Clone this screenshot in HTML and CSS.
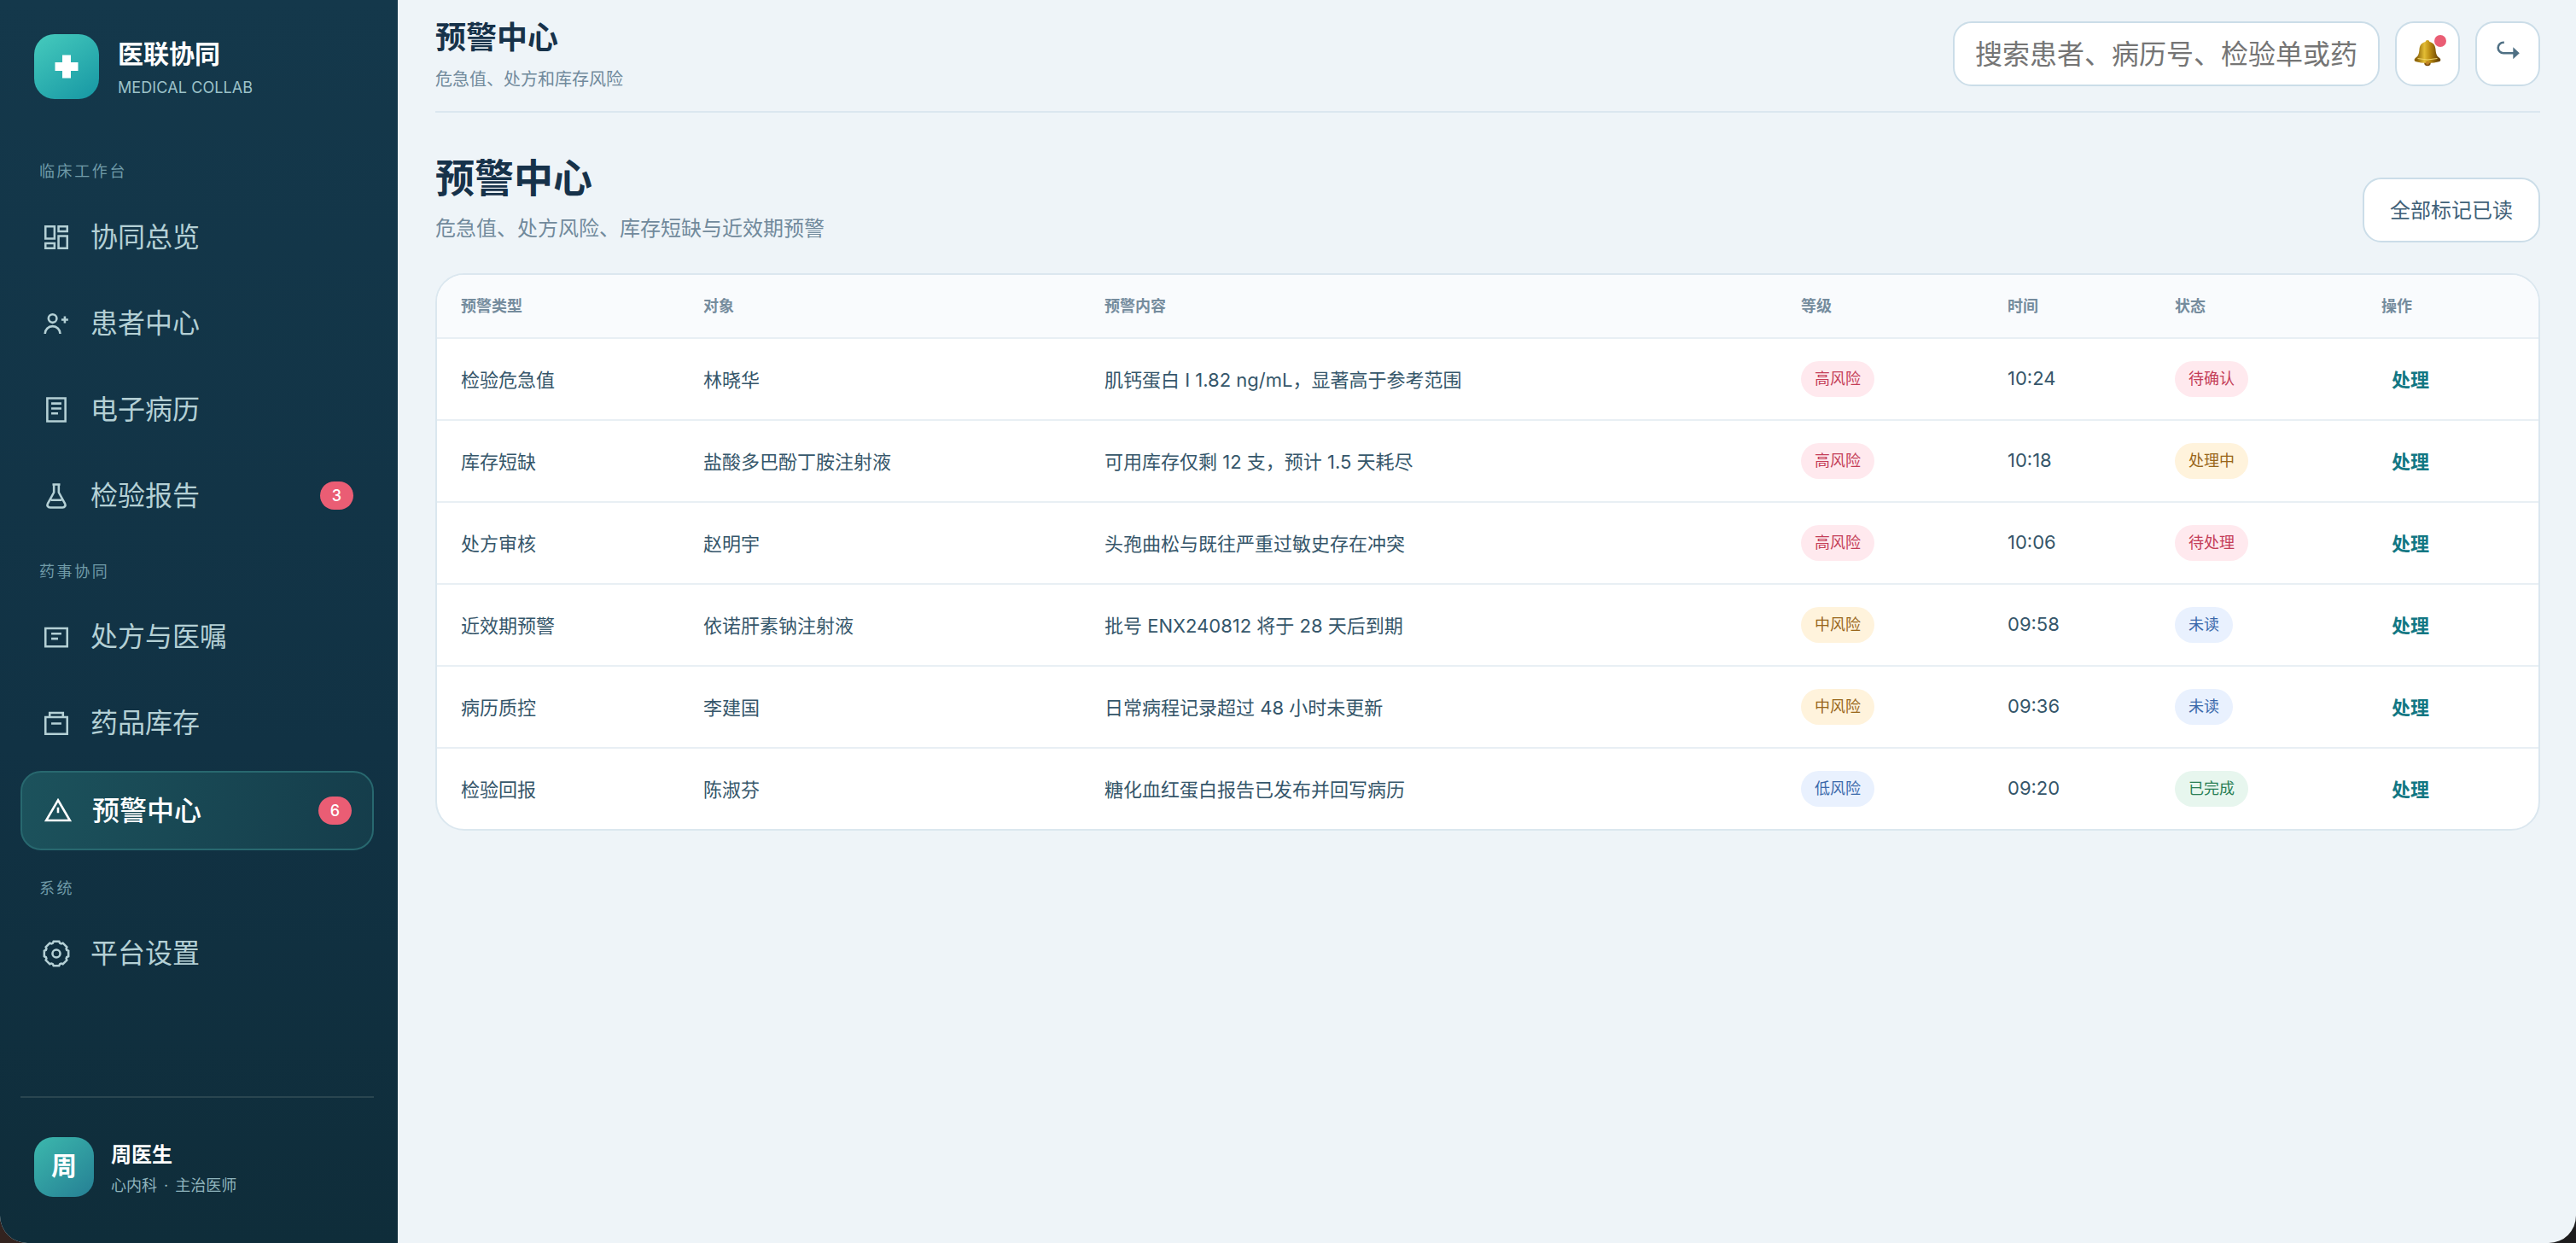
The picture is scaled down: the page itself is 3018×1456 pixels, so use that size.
FILE: index.html
```
<!DOCTYPE html>
<html lang="zh-CN">
<head>
    <meta charset="UTF-8">
    <meta name="viewport" content="width=device-width, initial-scale=1.0">
    <title>医联协同 - 预警中心</title>
    <link rel="stylesheet" href="styles.css">
</head>
<body>
    <div class="app">
        <aside class="sidebar">
            <div class="brand">
                <div class="brand-mark">
                    <svg width="28" height="28" viewBox="0 0 28 28"><path d="M9 0.5h10v8.5h8.5v10H19v8.5H9V19H0.5V9H9z" fill="#fff"/></svg>
                </div>
                <div class="brand-text">
                    <strong>医联协同</strong>
                    <span>MEDICAL COLLAB</span>
                </div>
            </div>

            <nav class="nav">
                <div class="nav-label">临床工作台</div>
                <a class="nav-item" href="#">
                    <svg class="icon" viewBox="0 0 24 24"><path d="M3 3h7.500v10H3zM13.800 3H21v4h-7.200zM13.800 11H21v10h-7.200zM3 17h7.500v4H3z"/></svg>
                    <span>协同总览</span>
                </a>
                <a class="nav-item" href="#">
                    <svg class="icon" viewBox="0 0 24 24"><circle cx="8.900" cy="7.800" r="3.400"/><path d="M2.600 20.500a6.300 6.300 0 0 1 12.600 0M19 6v5.600M16.200 8.800h5.600"/></svg>
                    <span>患者中心</span>
                </a>
                <a class="nav-item" href="#">
                    <svg class="icon" viewBox="0 0 24 24"><path d="M4.500 2.500h15v19h-15zM7.800 6.800h8.400M7.800 11h8.400M7.800 15h5.600"/></svg>
                    <span>电子病历</span>
                </a>
                <a class="nav-item" href="#">
                    <svg class="icon" viewBox="0 0 24 24"><path d="M8.800 2.500h6.400M10 2.500V9l-5.100 9.200c-.9 1.700.1 3.300 1.900 3.300h10.400c1.800 0 2.800-1.600 1.900-3.300L14 9V2.500M7.500 15.300h9"/></svg>
                    <span>检验报告</span>
                    <em class="count">3</em>
                </a>

                <div class="nav-label">药事协同</div>
                <a class="nav-item" href="#">
                    <svg class="icon" viewBox="0 0 24 24"><path d="M3 5h18v15H3zM7.800 9.300h8.400M7.800 13.500h5.600"/></svg>
                    <span>处方与医嘱</span>
                </a>
                <a class="nav-item" href="#">
                    <svg class="icon" viewBox="0 0 24 24"><path d="M3 7h18v14H3zM6.500 7V3.500h11V7M7.800 12.300h8.400"/></svg>
                    <span>药品库存</span>
                </a>
                <a class="nav-item active" href="#">
                    <svg class="icon" viewBox="0 0 24 24"><path d="M12 3l9.800 16.800H2.200zM12 9v4.500"/></svg>
                    <span>预警中心</span>
                    <em class="count">6</em>
                </a>

                <div class="nav-label">系统</div>
                <a class="nav-item" href="#">
                    <svg class="icon" viewBox="0 0 24 24"><circle cx="12" cy="12" r="3.200"/><path d="M9.700 2h4.600l.7 1.400 1 .4 1.400-.5 3.300 3.300-.5 1.400.4 1 1.400.7v4.600l-1.400.7-.4 1 .5 1.400-3.300 3.300-1.400-.5-1 .4-.7 1.400H9.700L9 20.600l-1-.4-1.400.5-3.300-3.300.5-1.400-.4-1L2 14.300V9.700L3.400 9l.4-1-.5-1.400 3.300-3.300 1.400.5 1-.4z"/></svg>
                    <span>平台设置</span>
                </a>
            </nav>

            <div class="profile">
                <div class="avatar">周</div>
                <div class="profile-text">
                    <strong>周医生</strong>
                    <span>心内科 · 主治医师</span>
                </div>
            </div>
        </aside>

        <main class="main">
            <header class="topbar">
                <div>
                    <div class="topbar-title">预警中心</div>
                    <div class="topbar-sub">危急值、处方和库存风险</div>
                </div>
                <div class="topbar-actions">
                    <input class="search" type="text" placeholder="搜索患者、病历号、检验单或药品">
                    <button class="icon-btn">
                        <svg width="34" height="34" viewBox="0 0 34 34">
                            <defs>
                                <linearGradient id="bell" x1="0" x2="1">
                                    <stop offset="0.1" stop-color="#8f6508"/>
                                    <stop offset="0.38" stop-color="#e3bd35"/>
                                    <stop offset="0.6" stop-color="#b98a10"/>
                                    <stop offset="0.9" stop-color="#6e4805"/>
                                </linearGradient>
                            </defs>
                            <circle cx="17" cy="28.500" r="3.800" fill="#7d5110"/>
                            <path d="M17 2c1.400 0 2.200.8 2.400 1.900 4.600 1 6.800 4.300 7.100 8.800.4 5.500 1.300 7.800 4.700 10.300 1.500 1.100 1.600 3.200 0 4-7.500 2.500-20.900 2.500-28.400 0-1.600-.8-1.500-2.900 0-4 3.400-2.500 4.300-4.800 4.700-10.300.3-4.500 2.500-7.800 7.100-8.800.2-1.100 1-1.900 2.400-1.900z" fill="url(#bell)"/>
                            <path d="M5.500 23.500q11.500 3 23 0" fill="none" stroke="#f1d66a" stroke-width="1"/>
                            <circle cx="17" cy="28.800" r="2" fill="#c08224"/>
                        </svg>
                        <i class="dot"></i>
                    </button>
                    <button class="icon-btn">
                        <svg width="30" height="28" viewBox="0 0 30 28"><path d="M10.800 1.700H10a6.300 6.300 0 0 0 0 12.600h12" fill="none" stroke="#4f7084" stroke-width="2.600"/><path d="M21.300 7.300l7.500 7-7.500 7z" fill="#4f7084"/></svg>
                    </button>
                </div>
            </header>

            <section class="page-head">
                <div>
                    <h1>预警中心</h1>
                    <p>危急值、处方风险、库存短缺与近效期预警</p>
                </div>
                <button class="btn">全部标记已读</button>
            </section>

            <section class="card">
                <table>
                    <colgroup>
                        <col class="c-type"><col class="c-target"><col class="c-content"><col class="c-level"><col class="c-time"><col class="c-status"><col>
                    </colgroup>
                    <thead>
                        <tr><th>预警类型</th><th>对象</th><th>预警内容</th><th>等级</th><th>时间</th><th>状态</th><th>操作</th></tr>
                    </thead>
                    <tbody>
                        <tr><td>检验危急值</td><td>林晓华</td><td>肌钙蛋白 I 1.82 ng/mL，显著高于参考范围</td><td><span class="tag red">高风险</span></td><td>10:24</td><td><span class="tag red">待确认</span></td><td><a class="link" href="#">处理</a></td></tr>
                        <tr><td>库存短缺</td><td>盐酸多巴酚丁胺注射液</td><td>可用库存仅剩 12 支，预计 1.5 天耗尽</td><td><span class="tag red">高风险</span></td><td>10:18</td><td><span class="tag amber">处理中</span></td><td><a class="link" href="#">处理</a></td></tr>
                        <tr><td>处方审核</td><td>赵明宇</td><td>头孢曲松与既往严重过敏史存在冲突</td><td><span class="tag red">高风险</span></td><td>10:06</td><td><span class="tag red">待处理</span></td><td><a class="link" href="#">处理</a></td></tr>
                        <tr><td>近效期预警</td><td>依诺肝素钠注射液</td><td>批号 ENX240812 将于 28 天后到期</td><td><span class="tag amber">中风险</span></td><td>09:58</td><td><span class="tag blue">未读</span></td><td><a class="link" href="#">处理</a></td></tr>
                        <tr><td>病历质控</td><td>李建国</td><td>日常病程记录超过 48 小时未更新</td><td><span class="tag amber">中风险</span></td><td>09:36</td><td><span class="tag blue">未读</span></td><td><a class="link" href="#">处理</a></td></tr>
                        <tr><td>检验回报</td><td>陈淑芬</td><td>糖化血红蛋白报告已发布并回写病历</td><td><span class="tag blue">低风险</span></td><td>09:20</td><td><span class="tag green">已完成</span></td><td><a class="link" href="#">处理</a></td></tr>
                    </tbody>
                </table>
            </section>
        </main>
    </div>
</body>
</html>
```
FILE: styles.css
```
* {
    box-sizing: border-box;
}

body {
    margin: 0;
    background: linear-gradient(90deg, #33231f 50%, #1d1c1d 50%);
    font-family: Inter, "Noto Sans CJK SC", sans-serif;
    color: #17324a;
}

a {
    text-decoration: none;
}

button, input {
    font-family: inherit;
}

.app {
    display: flex;
    height: 1456px;
    background: #eef4f8;
    border-radius: 0 0 32px 32px;
    overflow: hidden;
}

/* sidebar */
.sidebar {
    width: 466px;
    flex-shrink: 0;
    display: flex;
    flex-direction: column;
    padding: 40px 28px 54px 24px;
    background: linear-gradient(180deg, #14384b 0%, #113244 60%, #0f2d3a 100%);
}

.brand {
    display: flex;
    align-items: center;
    gap: 22px;
    padding-left: 16px;
    height: 76px;
}

.brand-mark {
    width: 76px;
    height: 76px;
    border-radius: 24px;
    display: flex;
    align-items: center;
    justify-content: center;
    background: linear-gradient(145deg, #46cbbd, #1696a3);
}

.brand-text, .profile-text {
    display: flex;
    flex-direction: column;
}

.brand-text {
    padding-top: 8px;
}

.brand-text strong {
    font-size: 30px;
    line-height: 42px;
    color: #fff;
}

.brand-text span {
    font-size: 18px;
    line-height: 38px;
    letter-spacing: 0.1px;
    color: #9cc2c9;
}

.nav {
    flex: 1;
    display: flex;
    flex-direction: column;
    gap: 12px;
    padding-top: 73px;
}

.nav-label {
    margin: 21px 0 7px 22px;
    font-size: 18px;
    line-height: 24px;
    letter-spacing: 2.6px;
    color: #709ba8;
}

.nav-label:first-child {
    margin: 0 0 8px 22px;
}

.nav-item {
    display: flex;
    align-items: center;
    gap: 23px;
    height: 89px;
    padding: 0 24px 0 25px;
    border-radius: 24px;
    font-size: 32px;
    color: #b4d0d5;
}

.nav-item span {
    margin-top: -5px;
}

.nav-item.active {
    height: 93px;
    color: #fff;
    font-weight: 500;
    background: linear-gradient(100deg, #1c525c, #153d4b);
    border: 2px solid #28686f;
}

.icon {
    width: 34px;
    height: 34px;
    fill: none;
    stroke: currentColor;
    stroke-width: 1.8;
}

.count {
    margin-left: auto;
    width: 39px;
    height: 33px;
    border-radius: 17px;
    background: #ea5d74;
    color: #fff;
    font-size: 18px;
    font-style: normal;
    font-weight: 500;
    line-height: 33px;
    text-align: center;
}

.profile {
    display: flex;
    align-items: center;
    gap: 20px;
    padding: 46px 0 0 16px;
    border-top: 2px solid #2a4650;
}

.avatar {
    width: 70px;
    height: 70px;
    border-radius: 22px;
    background: linear-gradient(140deg, #3cb8ad, #257f94);
    color: #fff;
    font-size: 30px;
    font-weight: 700;
    line-height: 66px;
    text-align: center;
}

.profile-text {
    height: 70px;
    padding-top: 3px;
}

.profile-text strong {
    font-size: 24px;
    line-height: 36px;
    color: #fff;
}

.profile-text span {
    font-size: 18px;
    line-height: 36px;
    word-spacing: 3px;
    color: #8fb4bd;
}

/* main */
.main {
    flex: 1;
    padding: 0 42px 0 44px;
}

.topbar {
    display: flex;
    justify-content: space-between;
    height: 132px;
    border-bottom: 2px solid #dbe7ef;
}

.topbar-title {
    margin-top: 18px;
    font-size: 36px;
    font-weight: 700;
    line-height: 52px;
}

.topbar-sub {
    margin-top: 8px;
    font-size: 20px;
    line-height: 30px;
    color: #718a9c;
}

.topbar-actions {
    display: flex;
    gap: 18px;
    padding-top: 25px;
}

.search {
    width: 500px;
    height: 76px;
    padding: 0 24px;
    border: 2px solid #cbdde8;
    border-radius: 22px;
    background: #fff;
    font-size: 32px;
}

.search::placeholder {
    color: #757575;
}

.icon-btn {
    position: relative;
    display: flex;
    align-items: center;
    justify-content: center;
    width: 76px;
    height: 76px;
    padding: 0;
    border: 2px solid #cbdde8;
    border-radius: 22px;
    background: #fff;
}

.icon-btn svg {
    margin-top: -2px;
}

.dot {
    position: absolute;
    top: 14px;
    right: 14px;
    width: 14px;
    height: 14px;
    border-radius: 50%;
    background: #ea5d74;
}

.page-head {
    display: flex;
    justify-content: space-between;
    align-items: flex-end;
    height: 152px;
    margin-bottom: 36px;
}

h1 {
    margin: 0;
    font-size: 46px;
    line-height: 66px;
}

.page-head p {
    margin: 10px 0 0;
    font-size: 24px;
    line-height: 33px;
    color: #718a9c;
}

.btn {
    width: 208px;
    height: 76px;
    padding: 0 0 3px;
    border: 2px solid #cbdde8;
    border-radius: 22px;
    background: #fff;
    color: #416178;
    font-size: 24px;
}

.card {
    border: 2px solid #dbe7ef;
    border-radius: 34px;
    background: #fff;
    overflow: hidden;
}

table {
    width: 100%;
    border-collapse: separate;
    border-spacing: 0;
    table-layout: fixed;
}

.c-type { width: 284px; }
.c-target { width: 470px; }
.c-content { width: 816px; }
.c-level { width: 242px; }
.c-time { width: 196px; }
.c-status { width: 242px; }

th, td {
    padding: 0 28px 3px;
    text-align: left;
    border-bottom: 2px solid #e8eff4;
}

th {
    height: 75px;
    background: #f9fbfd;
    color: #758c9d;
    font-size: 18px;
}

td {
    height: 96px;
    color: #35566a;
    font-size: 22px;
}

tr:last-child td {
    height: 94px;
    border-bottom: none;
}

.tag {
    display: inline-block;
    margin-top: 3px;
    padding: 0 16px;
    border-radius: 21px;
    font-size: 18px;
    line-height: 42px;
    vertical-align: middle;
}

.red { background: #ffe9ee; color: #c43d57; }
.amber { background: #fff3dc; color: #99661a; }
.blue { background: #e9f1fe; color: #3b69ab; }
.green { background: #e7f6ee; color: #2a7f55; }

.link {
    padding: 0 12px;
    color: #127783;
    font-weight: 700;
}
```
